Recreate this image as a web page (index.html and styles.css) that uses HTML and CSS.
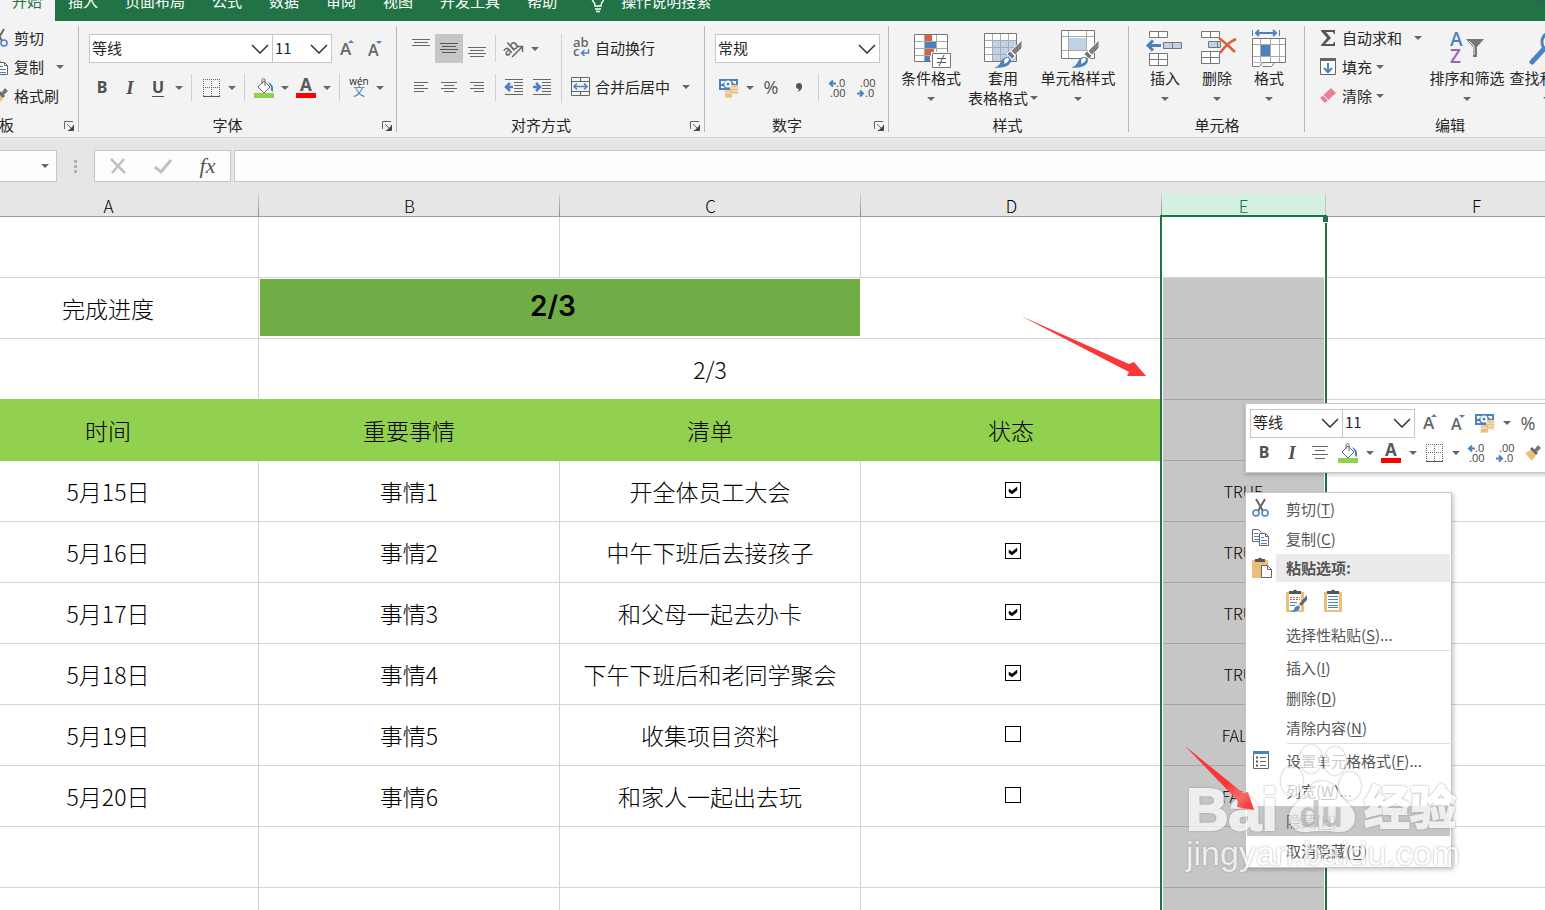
FILE: index.html
```
<!DOCTYPE html>
<html lang="zh-CN">
<head>
  <meta charset="UTF-8">
  <meta name="viewport" content="width=device-width, initial-scale=1.0">
  <title>完成进度</title>
  <link rel="stylesheet" href="styles.css">
</head>
<body>

  <!-- shared icons -->
  <svg class="defs" aria-hidden="true">
    <symbol id="i-grow" viewBox="0 0 20 20"><text x="4" y="16" font-size="17" class="t-semi">A</text><path d="M12 4l3-3 3 3z" fill="#4b82bd"/></symbol>
    <symbol id="i-shrink" viewBox="0 0 20 20"><text x="4" y="17" font-size="16" class="t-semi">A</text><path d="M12 2h6l-3 3z" fill="#4b82bd"/></symbol>
    <symbol id="i-border" viewBox="0 0 20 20"><path d="M2 1.500h17M2 9.500h17M2.500 1v17M10.500 1v17M18.500 1v17" stroke="#666" stroke-dasharray="1 1" fill="none"/><path d="M2 18.500h17" stroke="#555"/></symbol>
    <symbol id="i-fill" viewBox="0 0 20 20"><path d="M4 9l6-6 6 6-6 6z" fill="#fff" stroke="#666"/><path d="M8 6V1.500q2-2 3 0V8" fill="none" stroke="#666"/><path d="M14 4q6 2 5 10q-3-1-2-5z" fill="#4b82bd"/><path d="M0 15h20v5H0z" fill="#92d050"/></symbol>
    <symbol id="i-color" viewBox="0 0 20 20"><text x="4" y="13" font-size="17" class="t-bold">A</text><path d="M0 15h20v5H0z" fill="#f00"/></symbol>
    <symbol id="i-center" viewBox="0 0 20 20"><path d="M2 5.500h16M5 9.500h10M2 13.500h16M5 17.500h10" transform="translate(0 -2)" stroke="#666"/></symbol>
    <symbol id="i-money" viewBox="0 0 20 20"><path d="M0 1h19v11H0z" fill="#4b82bd"/><path d="M2 3h4q-1 3-4 3zM17 3h-4q1 3 4 3zM2 10h4q-1-2-4-2z" fill="#fff"/><circle cx="9" cy="6" r="3.500" fill="#fff"/><circle cx="9" cy="6" r="1.500" fill="#4b82bd"/><path d="M11 7h9v11h-6v2H5v-8h6z" fill="#f3f3f3"/><path d="M12 8.500h7M11 11.500h8M12 14.500h7M6 13.500h7M6 16.500h7M6 18.500h7" stroke="#e9bf79" stroke-width="2"/></symbol>
    <symbol id="i-inc" viewBox="0 0 20 20"><path d="M2 5.500h6M5 2.500l-3 3 3 3" fill="none" stroke="#4b82bd" stroke-width="2"/><text x="8" y="9" font-size="11" class="t-num">.0</text><text x="2" y="19" font-size="11" class="t-num">.00</text></symbol>
    <symbol id="i-dec" viewBox="0 0 20 20"><text x="4" y="9" font-size="11" class="t-num">.00</text><path d="M1 15.500h6M4 12.500l3 3-3 3" fill="none" stroke="#4b82bd" stroke-width="2"/><text x="9" y="19" font-size="11" class="t-num">.0</text></symbol>
    <symbol id="i-brush" viewBox="0 0 18 18"><path d="M1 9l6-3 5 5-4 6z" fill="#e9bf79"/><path d="M6 5l2-2 6 6-2 2z" fill="#666"/><path d="M10 6l4-5 3 3-4 4z" fill="#777"/></symbol>
    <symbol id="i-cut" viewBox="0 0 18 20"><path d="M4 1l7 12M13 1L6 13" stroke="#666" stroke-width="2"/><circle cx="4" cy="15" r="3" fill="none" stroke="#4b82bd" stroke-width="1.500"/><circle cx="13" cy="15" r="3" fill="none" stroke="#4b82bd" stroke-width="1.500"/></symbol>
    <symbol id="i-copy" viewBox="0 0 18 20"><path d="M.500 1.500h6l3 3v9h-9z" fill="#fff" stroke="#666"/><path d="M2 5.500h4M2 8.500h5M2 11.500h5" stroke="#4b82bd"/><path d="M7.500 5.500h6l3 3v9h-9z" fill="#fff" stroke="#666"/><path d="M13.500 5.500v3h3" fill="none" stroke="#666"/><path d="M9 9.500h3M9 12.500h6M9 15.500h6" stroke="#4b82bd"/></symbol>
    <symbol id="i-launch" viewBox="0 0 10 10"><path d="M.500 8V.500H9M3 3l5 5" fill="none" stroke="#666"/><path d="M4 9.500h5.500V4" fill="none" stroke="#444"/><path d="M9 5v4H5z" fill="#444"/></symbol>
    <symbol id="i-paint" viewBox="0 0 38 38"><path d="M38 10v8l-7 7-4-4z" fill="#808080" stroke="#f3f3f3"/><path d="M26 21l5 5-3 3-5-5z" fill="#777" stroke="#f3f3f3"/><path d="M10 37.500q5-1 7-6 3-6 8-4 4 3 0 7-5 4-15 3z" fill="#4b82bd"/><path d="M20 30q3-4 5-1 0 3-5 5 1-2 0-4z" fill="#fff"/></symbol>
  </svg>

  <div class="app">
    <nav class="tabs">
      <a href="#" class="tab active">开始</a>
      <a href="#" class="tab">插入</a>
      <a href="#" class="tab">页面布局</a>
      <a href="#" class="tab">公式</a>
      <a href="#" class="tab">数据</a>
      <a href="#" class="tab">审阅</a>
      <a href="#" class="tab">视图</a>
      <a href="#" class="tab">开发工具</a>
      <a href="#" class="tab">帮助</a>
      <a href="#" class="tab tell">
        <svg width="16" height="24" viewBox="0 0 16 24" fill="none" stroke="#fff" stroke-width="1.500"><path d="M5 17q0-3-2-5a6 6 0 1 1 10 0q-2 2-2 5zM5 20h6M6 22.500h4"/></svg>
        操作说明搜索
      </a>
    </nav>

    <div class="ribbon">
      <section class="group clipboard">
        <div class="stack">
          <button class="small"><svg width="18" height="20"><use href="#i-cut"/></svg>剪切</button>
          <button class="small"><svg width="18" height="20"><use href="#i-copy"/></svg>复制<i class="caret far"></i></button>
          <button class="small"><svg width="18" height="18"><use href="#i-brush"/></svg>格式刷</button>
        </div>
        <div class="group-label"><span>剪贴板</span><button class="launch" aria-label="剪贴板设置"><svg width="10" height="10"><use href="#i-launch"/></svg></button></div>
      </section>

      <section class="group font">
        <div class="row combos">
          <select class="combo" aria-label="字体"><option>等线</option></select>
          <select class="combo size" aria-label="字号"><option>11</option></select>
          <button class="btn" aria-label="增大字号"><svg width="20" height="20"><use href="#i-grow"/></svg></button>
          <button class="btn" aria-label="减小字号"><svg width="20" height="20"><use href="#i-shrink"/></svg></button>
        </div>
        <div class="row">
          <button class="btn bold">B</button>
          <button class="btn italic">I</button>
          <button class="btn bold under">U</button>
          <button class="drop" aria-label="下划线"><i class="caret"></i></button>
          <i class="sep"></i>
          <button class="btn" aria-label="边框"><svg width="20" height="20"><use href="#i-border"/></svg></button>
          <button class="drop" aria-label="更多边框"><i class="caret"></i></button>
          <i class="sep"></i>
          <button class="btn" aria-label="填充颜色"><svg width="20" height="20"><use href="#i-fill"/></svg></button>
          <button class="drop" aria-label="更多填充"><i class="caret"></i></button>
          <button class="btn" aria-label="字体颜色"><svg width="20" height="20"><use href="#i-color"/></svg></button>
          <button class="drop" aria-label="更多颜色"><i class="caret"></i></button>
          <i class="sep"></i>
          <button class="btn pinyin"><span>wén</span><b>文</b></button>
          <button class="drop" aria-label="拼音"><i class="caret"></i></button>
        </div>
        <div class="group-label"><span>字体</span><button class="launch" aria-label="字体设置"><svg width="10" height="10"><use href="#i-launch"/></svg></button></div>
      </section>

      <section class="group align">
        <div class="split">
          <div class="rows">
            <div class="row">
              <button class="btn" aria-label="顶端对齐"><svg width="20" height="20" stroke="#666"><path d="M1 3.500h18M3 6.500h14M1 9.500h18" transform="translate(0 -3)"/></svg></button>
              <button class="btn on" aria-label="垂直居中"><svg width="20" height="20" stroke="#555"><path d="M1 4.500h18M3 7.500h14M1 10.500h18M3 13.500h14"/></svg></button>
              <button class="btn" aria-label="底端对齐"><svg width="20" height="20" stroke="#666"><path d="M1 8.500h18M3 11.500h14M1 14.500h18M3 17.500h14"/></svg></button>
              <i class="sep"></i>
              <button class="btn" aria-label="方向"><svg width="20" height="20"><text x="1" y="15" font-size="14" class="t-semi" transform="rotate(-42 6 14)">ab</text><path d="M8 18L18 8M13 7.500h5.500V13" fill="none" stroke="#666" stroke-width="1.500"/></svg></button>
              <button class="drop" aria-label="更多方向"><i class="caret"></i></button>
            </div>
            <div class="row">
              <button class="btn" aria-label="左对齐"><svg width="20" height="20" stroke="#666"><path d="M3 4.500h14M3 7.500h10M3 10.500h14M3 13.500h10"/></svg></button>
              <button class="btn" aria-label="居中"><svg width="20" height="20" stroke="#666"><path d="M2 4.500h16M5 7.500h10M2 10.500h16M5 13.500h10"/></svg></button>
              <button class="btn" aria-label="右对齐"><svg width="20" height="20" stroke="#666"><path d="M3 4.500h14M7 7.500h10M3 10.500h14M7 13.500h10"/></svg></button>
              <i class="sep"></i>
              <button class="btn" aria-label="减少缩进"><svg width="20" height="20" fill="none" stroke="#666"><path d="M1 1.500h18M10 4.500h9M10 7.500h9M10 10.500h9M10 13.500h9M1 16.500h18"/><path d="M2 9h7M6 5L2 9l4 4" stroke="#4b82bd" stroke-width="2.500"/></svg></button>
              <button class="btn" aria-label="增加缩进"><svg width="20" height="20" fill="none" stroke="#666"><path d="M1 1.500h18M10 4.500h9M10 7.500h9M10 10.500h9M10 13.500h9M1 16.500h18"/><path d="M1 9h7M4 5l4 4-4 4" stroke="#4b82bd" stroke-width="2.500"/></svg></button>
            </div>
          </div>
          <i class="sep tall"></i>
          <div class="rows">
            <button class="wide"><svg width="20" height="20"><text x="2" y="9" font-size="13" class="t-semi">ab</text><text x="2" y="18" font-size="13" class="t-semi">c</text><path d="M17.500 11v4H11M13.500 12l-3 3 3 3" fill="none" stroke="#4b82bd" stroke-width="1.500"/></svg>自动换行</button>
            <button class="wide"><svg width="20" height="20" fill="none" stroke="#666"><path d="M.500.500h18v18H.500zM.500 4.500h18M.500 14.500h18M9.500.500v4M9.500 14.500v4"/><path d="M3 9.500h13M6 6.500l-3 3 3 3M13 6.500l3 3-3 3" stroke="#4b82bd" stroke-width="1.500"/></svg>合并后居中<i class="caret far"></i></button>
          </div>
        </div>
        <div class="group-label"><span>对齐方式</span><button class="launch" aria-label="对齐设置"><svg width="10" height="10"><use href="#i-launch"/></svg></button></div>
      </section>

      <section class="group number">
        <div class="row">
          <select class="combo" aria-label="数字格式"><option>常规</option></select>
        </div>
        <div class="row">
          <button class="btn" aria-label="会计格式"><svg width="20" height="20"><use href="#i-money"/></svg></button>
          <button class="drop" aria-label="更多货币"><i class="caret"></i></button>
          <button class="btn percent">%</button>
          <button class="btn" aria-label="千位分隔"><svg width="20" height="20"><circle cx="10" cy="8" r="3" fill="#555"/><path d="M13 8q0 5-5 6 3-2 2-6z" fill="#555"/></svg></button>
          <i class="sep"></i>
          <button class="btn" aria-label="增加小数位"><svg width="20" height="20"><use href="#i-inc"/></svg></button>
          <button class="btn" aria-label="减少小数位"><svg width="20" height="20"><use href="#i-dec"/></svg></button>
        </div>
        <div class="group-label"><span>数字</span><button class="launch" aria-label="数字设置"><svg width="10" height="10"><use href="#i-launch"/></svg></button></div>
      </section>

      <section class="group styles">
        <div class="bigs">
          <button class="big">
            <svg width="38" height="38" viewBox="-2 0 38 38"><path d="M.500 4.500h33v27H.500z" fill="#fff" stroke="#777"/><path d="M10.500 5v26M22.500 5v26M1 11.500h32M1 18.500h32M1 25.500h32" stroke="#aaa"/><path d="M11 5h7v6h-7zM11 19h9v6h-9z" fill="#d8613c"/><path d="M11 12h11v6H11zM11 26h5v5h-5z" fill="#4b82bd"/><path d="M17 22h20v15H17z" fill="#f3f3f3"/><path d="M18.500 23.500h18v14h-18z" fill="#fff" stroke="#777"/><path d="M23 28.500h9M23 32.500h9M30 25l-5 11" stroke="#555"/></svg>
            <span>条件格式</span><i class="caret"></i>
          </button>
          <button class="big mid">
            <svg width="38" height="38"><path d="M.500 3.500h32v28H.500z" fill="#fff" stroke="#777"/><path d="M9 11h23v20H9z" fill="#bfd2e8"/><path d="M8.500 4v27M16.500 4v27M24.500 4v27M1 10.500h31M1 17.500h31M1 24.500h31" stroke="#aaa"/><use href="#i-paint"/></svg>
            <span>套用</span><span class="line">表格格式<i class="caret"></i></span>
          </button>
          <button class="big last">
            <svg width="38" height="38" viewBox="-2 0 38 38"><path d="M.500.500h33v28H.500z" fill="#fff" stroke="#777"/><path d="M8 8h17v12H8z" fill="#bfd2e8"/><path d="M7.500 1v27M25.500 1v27M1 6.500h32M1 20.500h32" stroke="#aaa"/><use href="#i-paint" width="38" height="38"/></svg>
            <span>单元格样式</span><i class="caret"></i>
          </button>
        </div>
        <div class="group-label"><span>样式</span></div>
      </section>

      <section class="group cells">
        <div class="bigs">
          <button class="big">
            <svg width="38" height="38" fill="#fff" stroke="#777"><path d="M3.500 1.500h18v6h-18zM12.500 1.500v6M3.500 23.500h18v12h-18zM12.500 23.500v12M3.500 29.500h18"/><path d="M17.500 12.500h18v6h-18zM26.500 12.500v6" fill="#bfd2e8"/><path d="M2 15.500h13M7 10.500l-5 5 5 5" fill="none" stroke="#4b82bd" stroke-width="3"/></svg>
            <span>插入</span><i class="caret"></i>
          </button>
          <button class="big">
            <svg width="38" height="38" fill="#fff" stroke="#777"><path d="M3.500 1.500h18v6h-18zM12.500 1.500v6M3.500 21.500h18v12h-18zM12.500 21.500v12M3.500 27.500h18"/><path d="M10.500 11.500h12v6h-12zM19.500 11.500v6" fill="#bfd2e8"/><path d="M21 8q8 6 16 14M38 9q-9 4-16 14" fill="none" stroke="#d8613c" stroke-width="2.500"/></svg>
            <span>删除</span><i class="caret"></i>
          </button>
          <button class="big">
            <svg width="38" height="38" fill="none" stroke="#777"><path d="M2.500 8.500h33v24h-33z" fill="#fff"/><path d="M10.500 9v23M20.500 9v23M29.500 9v23M3 14.500h32M3 26.500h32" stroke="#aaa"/><path d="M11 15h9v11h-9z" fill="#4b82bd" stroke="none"/><path d="M2.500 32.500v4h7l3-4M12.500 36.500h9l3-4" fill="#fff"/><path d="M2.500 0v6M29.500 0v6" stroke="#4b82bd"/><path d="M6 3h20M9 0L6 3l3 3M23 0l3 3-3 3" stroke="#4b82bd" stroke-width="2"/></svg>
            <span>格式</span><i class="caret"></i>
          </button>
        </div>
        <div class="group-label"><span>单元格</span></div>
      </section>

      <section class="group editing">
        <div class="split">
          <div class="stack">
            <button class="small"><svg width="18" height="18"><path d="M2 1h14v4h-1l-1-2H7l5 6-6 6h8l1-2h1v4H2v-1l6-7-6-7z" fill="#555"/></svg>自动求和<i class="caret far"></i></button>
            <button class="small"><svg width="18" height="18"><path d="M1.500 1.500h15v15h-15z" fill="#fff" stroke="#666"/><path d="M1 0h16v3H1z" fill="#666"/><path d="M9 5v9M5 10l4 4 4-4" fill="none" stroke="#4b82bd" stroke-width="2"/></svg>填充<i class="caret"></i></button>
            <button class="small"><svg width="18" height="18"><path d="M1 11L12 1l5 5L6 16z" fill="#e88098"/><path d="M4 8l5 5" stroke="#fff"/></svg>清除<i class="caret"></i></button>
          </div>
          <button class="big">
            <svg width="38" height="38"><text x="2" y="16" font-size="19" class="t-sort" fill="#4b82bd">A</text><text x="2" y="33" font-size="19" class="t-sort" fill="#9a63b8">Z</text><path d="M18 9h18l-7 8v10h-4V17z" fill="#777"/><path d="M21 11l5 5v9" fill="none" stroke="#f3f3f3"/></svg>
            <span>排序和筛选</span><i class="caret"></i>
          </button>
          <button class="big">
            <svg width="38" height="38"><path d="M4 32l12-13" stroke="#4b82bd" stroke-width="5" stroke-linecap="round"/><circle cx="24" cy="12" r="10" fill="#fff" stroke="#4b82bd" stroke-width="3"/></svg>
            <span>查找和选择</span><i class="caret"></i>
          </button>
        </div>
        <div class="group-label"><span>编辑</span></div>
      </section>
    </div>

    <div class="formula-bar">
      <button class="name-box" aria-label="名称框"><i class="caret"></i></button>
      <i class="dots"></i>
      <div class="fx-buttons">
        <button aria-label="取消"><svg width="18" height="18"><path d="M2 2l14 14M15 2L3 16" stroke="#c0c0c0" stroke-width="2.500"/></svg></button>
        <button aria-label="输入"><svg width="18" height="18"><path d="M1 10l6 5L17 3" fill="none" stroke="#c0c0c0" stroke-width="3"/></svg></button>
        <button class="fx">fx</button>
      </div>
      <input class="formula" type="text" aria-label="编辑栏">
    </div>

    <main class="sheet">
      <table>
        <colgroup><col><col><col><col><col class="narrow"><col></colgroup>
        <thead>
          <tr><th>A</th><th>B</th><th>C</th><th>D</th><th class="picked">E<div class="selection"></div></th><th>F</th></tr>
        </thead>
        <tbody>
          <tr><td></td><td></td><td></td><td></td><td></td><td></td></tr>
          <tr><td>完成进度</td><td colspan="3" class="progress"><div class="bar" style="width: 66.66%">2/3</div></td><td class="flag"></td><td></td></tr>
          <tr class="before-title"><td>&nbsp;</td><td colspan="3">2/3</td><td class="flag"></td><td></td></tr>
          <tr class="title"><td>时间</td><td>重要事情</td><td>清单</td><td>状态</td><td class="flag"></td><td></td></tr>
          <tr><td>5月15日</td><td>事情1</td><td>开全体员工大会</td><td class="check"><input type="checkbox" aria-label="事情1" checked></td><td class="flag">TRUE</td><td></td></tr>
          <tr><td>5月16日</td><td>事情2</td><td>中午下班后去接孩子</td><td class="check"><input type="checkbox" aria-label="事情2" checked></td><td class="flag">TRUE</td><td></td></tr>
          <tr><td>5月17日</td><td>事情3</td><td>和父母一起去办卡</td><td class="check"><input type="checkbox" aria-label="事情3" checked></td><td class="flag">TRUE</td><td></td></tr>
          <tr><td>5月18日</td><td>事情4</td><td>下午下班后和老同学聚会</td><td class="check"><input type="checkbox" aria-label="事情4" checked></td><td class="flag">TRUE</td><td></td></tr>
          <tr><td>5月19日</td><td>事情5</td><td>收集项目资料</td><td class="check"><input type="checkbox" aria-label="事情5"></td><td class="flag">FALSE</td><td></td></tr>
          <tr><td>5月20日</td><td>事情6</td><td>和家人一起出去玩</td><td class="check"><input type="checkbox" aria-label="事情6"></td><td class="flag">FALSE</td><td></td></tr>
          <tr><td></td><td></td><td></td><td></td><td class="flag"></td><td></td></tr>
          <tr><td></td><td></td><td></td><td></td><td class="flag"></td><td></td></tr>
        </tbody>
      </table>
    </main>

    <div class="mini-toolbar">
      <div class="row combos">
        <select class="combo" aria-label="字体"><option>等线</option></select>
        <select class="combo size" aria-label="字号"><option>11</option></select>
        <button class="btn" aria-label="增大字号"><svg width="20" height="20"><use href="#i-grow"/></svg></button>
        <button class="btn" aria-label="减小字号"><svg width="20" height="20"><use href="#i-shrink"/></svg></button>
        <button class="btn" aria-label="会计格式"><svg width="20" height="20"><use href="#i-money"/></svg></button>
        <button class="drop" aria-label="更多货币"><i class="caret"></i></button>
        <button class="btn percent">%</button>
      </div>
      <div class="row">
        <button class="btn bold">B</button>
        <button class="btn italic">I</button>
        <button class="btn" aria-label="居中"><svg width="20" height="20"><use href="#i-center"/></svg></button>
        <button class="btn" aria-label="填充颜色"><svg width="20" height="20"><use href="#i-fill"/></svg></button>
        <button class="drop" aria-label="更多填充"><i class="caret"></i></button>
        <button class="btn" aria-label="字体颜色"><svg width="20" height="20"><use href="#i-color"/></svg></button>
        <button class="drop" aria-label="更多颜色"><i class="caret"></i></button>
        <button class="btn" aria-label="边框"><svg width="20" height="20"><use href="#i-border"/></svg></button>
        <button class="drop" aria-label="更多边框"><i class="caret"></i></button>
        <button class="btn" aria-label="增加小数位"><svg width="20" height="20"><use href="#i-inc"/></svg></button>
        <button class="btn" aria-label="减少小数位"><svg width="20" height="20"><use href="#i-dec"/></svg></button>
        <button class="btn" aria-label="格式刷"><svg width="18" height="18"><use href="#i-brush"/></svg></button>
      </div>
    </div>

    <div class="menu">
      <button class="item"><svg width="18" height="20"><use href="#i-cut"/></svg><span>剪切(<u>T</u>)</span></button>
      <button class="item"><svg width="18" height="20"><use href="#i-copy"/></svg><span>复制(<u>C</u>)</span></button>
      <div class="heading">
        <svg width="20" height="22"><path d="M0 3h16v18H0z" fill="#e9bf79"/><path d="M3 5V2h3q2-3 4 0h3v3z" fill="#555"/><path d="M9.500 8.500h6l4 4v8h-10z" fill="#fff" stroke="#666"/><path d="M15.500 8.500v4h4" fill="none" stroke="#666"/></svg>
        <b>粘贴选项:</b>
      </div>
      <div class="paste">
        <button aria-label="粘贴"><svg width="22" height="24"><path d="M0 3h18v20H0z" fill="#e9bf79"/><path d="M3 5h12v16H3z" fill="#fff"/><path d="M3 5V2h4q2-3 4 0h4v3z" fill="#555"/><path d="M4 8.500h10M4 10.500h10" stroke="#d8613c" stroke-dasharray="2 1"/><path d="M4 13.500h7M4 16.500h5" stroke="#4b82bd"/><path d="M21 6v5l-6 6-2-2z" fill="#666"/><path d="M4 23q4-1 5-5 4-3 5 0 0 5-10 5z" fill="#4b82bd"/></svg></button>
        <button aria-label="粘贴值"><svg width="18" height="24"><path d="M0 3h18v20H0z" fill="#e9bf79"/><path d="M3 5h12v16H3z" fill="#fff"/><path d="M3 5V2h4q2-3 4 0h4v3z" fill="#555"/><path d="M4 7.500h10M4 10.500h10M4 13.500h10M4 16.500h10M4 18.500h10" stroke="#4b82bd"/></svg></button>
      </div>
      <button class="item"><span>选择性粘贴(<u>S</u>)...</span></button>
      <hr>
      <button class="item"><span>插入(<u>I</u>)</span></button>
      <button class="item"><span>删除(<u>D</u>)</span></button>
      <button class="item"><span>清除内容(<u>N</u>)</span></button>
      <hr>
      <button class="item"><svg width="18" height="20"><path d="M1.500 1.500h15v17h-15z" fill="#fff" stroke="#666"/><path d="M1 1h16v3H1z" fill="#4b82bd"/><path d="M4 7.500h2M4 11.500h2M4 15.500h2" stroke="#555" stroke-width="2"/><path d="M8 7.500h6M8 11.500h6M8 15.500h6" stroke="#666"/></svg><span>设置单元格格式(<u>F</u>)...</span></button>
      <button class="item"><span>列宽(<u>W</u>)...</span></button>
      <button class="item hover"><span>隐藏(<u>H</u>)</span></button>
      <button class="item"><span>取消隐藏(<u>U</u>)</span></button>
    </div>

    <svg class="pointer first" width="126" height="62" viewBox="0 0 126 62"><path d="M0 0L108 48 113 46 125 60H106L108 56z" fill="#fc3737"/></svg>

    <svg class="watermark" width="290" height="150" viewBox="0 0 290 150">
      <g class="logo">
        <text x="2" y="90" font-size="59" font-weight="bold">Bai</text>
        <ellipse cx="127" cy="19" rx="10" ry="13"/>
        <ellipse cx="151" cy="21" rx="10" ry="13"/>
        <ellipse cx="108" cy="41" rx="10" ry="14"/>
        <ellipse cx="166" cy="46" rx="10" ry="13"/>
        <path d="M138 42q10 0 16 11 4 7 10 12 9 9 5 18-4 9-16 8-15-2-30 0-12 1-16-8-4-9 5-18 6-5 10-12 6-11 16-11z"/>
        <text x="180" y="84" font-size="46" font-weight="bold">经验</text>
        <text x="2" y="125" font-size="34" class="site">jingyan.baidu.com</text>
      </g>
      <text x="115" y="87" font-size="36" font-weight="bold" class="du">du</text>
    </svg>

    <svg class="pointer second" width="70" height="66" viewBox="0 0 70 66"><defs><linearGradient id="fade" x1="0" y1="0" x2="1" y2="1"><stop offset=".6" stop-color="#fc3737"/><stop offset=".8" stop-color="#f76a6a"/><stop offset=".95" stop-color="#fc3737"/></linearGradient></defs><path d="M0 0L58 47 63 46 69 64 52 61 53 55z" fill="url(#fade)"/></svg>
  </div>

</body>
</html>
```
FILE: styles.css
```
* {
  box-sizing: border-box;
}

body {
  margin: 0;
  font-family: "Noto Sans CJK SC", sans-serif;
  font-size: 15px;
  color: #262626;
  background: #fff;
  overflow: hidden;
}

button {
  display: flex;
  align-items: center;
  justify-content: center;
  margin: 0;
  padding: 0;
  border: none;
  background: none;
  font: inherit;
  color: inherit;
}

svg {
  display: block;
  flex: none;
  overflow: visible;
}

.defs {
  position: absolute;
  width: 0;
  height: 0;
}

.t-bold {
  font-family: "Noto Sans", sans-serif;
  font-weight: bold;
  fill: #5a5a5a;
}

.t-semi {
  font-family: "Open Sans", sans-serif;
  font-weight: 600;
  fill: #666;
}

.t-sort {
  font-family: "Open Sans", sans-serif;
  font-weight: 600;
}

.t-num {
  font-family: "Open Sans", sans-serif;
  fill: #444;
}

.app {
  position: relative;
  display: flex;
  flex-direction: column;
  height: 100vh;
  overflow: hidden;
}

/* tabs */
.tabs {
  display: flex;
  align-items: flex-end;
  flex: none;
  height: 21px;
  overflow: hidden;
  background: radial-gradient(circle at 100% -8px, #28684a 12px, #217346 13px);
}

.tab {
  display: flex;
  align-items: center;
  flex: none;
  height: 40px;
  padding: 0 14px 1px 13px;
  color: #fff;
  line-height: 38px;
  text-decoration: none;
}

.tab.active {
  background: #f3f3f3;
  color: #217346;
  padding-left: 12px;
  padding-right: 13px;
}

.tell {
  gap: 15px;
  padding-left: 19px;
}

/* ribbon */
.ribbon {
  display: flex;
  flex: none;
  height: 117px;
  overflow: hidden;
  background: #f3f3f3;
  border-bottom: 1px solid #d2d2d2;
}

.group {
  position: relative;
  display: flex;
  flex-direction: column;
  flex: none;
  padding: 13px 0 1px 9px;
}

.group::after {
  content: "";
  position: absolute;
  right: 0;
  top: 5px;
  bottom: 5px;
  width: 1px;
  background: #b9b9b9;
}

.clipboard {
  width: 79px;
  padding: 3px 0 1px;
  overflow: hidden;
}

.font {
  width: 318px;
}

.align {
  width: 308px;
  padding-left: 10px;
}

.number {
  width: 184px;
  padding-left: 10px;
}

.styles {
  width: 240px;
  padding: 9px 0 1px 7px;
}

.cells {
  width: 176px;
  padding: 9px 0 1px 10px;
}

.editing {
  width: 290px;
  padding: 3px 0 1px 14px;
}

.editing .big {
  width: 80px;
  padding-top: 6px;
}

.group-label {
  display: flex;
  align-items: center;
  height: 20px;
  margin: auto 0 0 -10px;
}

.group-label span {
  flex: 1;
  padding-bottom: 3px;
  text-align: center;
  white-space: nowrap;
}

.editing .group-label {
  margin-left: -14px;
}

.clipboard .group-label {
  justify-content: flex-end;
  margin-left: 0;
}

.clipboard .group-label span {
  flex: none;
  padding-right: 45px;
}

.launch {
  flex: none;
  width: 20px;
}

.row {
  display: flex;
  align-items: center;
  height: 29px;
  margin-bottom: 10px;
}

.combos {
  padding-left: 1px;
}

.combo {
  width: 184px;
  height: 29px;
  padding: 0 3px 2px 2px;
  border: 1px solid #c6c6c6;
  border-radius: 0;
  appearance: none;
  background: #fff url("data:image/svg+xml,%3Csvg xmlns='http://www.w3.org/2000/svg' width='18' height='10'%3E%3Cpath d='M1 1l8 8 8-8' fill='none' stroke='%23333' stroke-width='1.5'/%3E%3C/svg%3E") no-repeat right 3px center;
  font: inherit;
  color: #262626;
}

.combo.size {
  width: 60px;
  margin-left: -1px;
}

.number .combo {
  width: 165px;
}

.btn {
  flex: none;
  width: 28px;
  height: 29px;
}

.btn.on {
  background: #c6c6c6;
}

.drop {
  flex: none;
  width: 14px;
  height: 29px;
}

.caret {
  flex: none;
  width: 0;
  height: 0;
  border: 4px solid transparent;
  border-top-color: #666;
  border-bottom: none;
}

.sep {
  flex: none;
  width: 1px;
  height: 27px;
  margin: 0 5px;
  background: #d0d0d0;
}

.align .row .sep {
  margin: 0 4px;
}

.sep.tall {
  height: 69px;
}

.bold {
  padding-bottom: 2px;
  font-family: "Noto Sans", sans-serif;
  font-size: 16px;
  font-weight: bold;
  color: #505050;
}

.italic {
  font-family: "Liberation Serif", serif;
  font-size: 19px;
  font-weight: bold;
  font-style: italic;
  color: #505050;
}

.under {
  text-decoration: underline;
  text-underline-offset: 3px;
  text-decoration-thickness: 1px;
}

.pinyin {
  flex-direction: column;
  font-family: "Open Sans", "Noto Sans CJK SC", sans-serif;
  font-size: 10px;
  line-height: 9px;
}

.pinyin b {
  font-size: 12px;
  line-height: 12px;
  font-weight: normal;
  color: #4b82bd;
}

.percent {
  padding-bottom: 1px;
  font-family: "Open Sans", sans-serif;
  font-size: 18px;
  color: #555;
}

.split {
  display: flex;
}

.rows {
  display: flex;
  flex-direction: column;
}

.wide {
  justify-content: flex-start;
  gap: 4px;
  height: 29px;
  margin: 0 0 10px 4px;
  padding-bottom: 2px;
}

.far {
  margin-left: 8px;
}

.stack {
  display: flex;
  flex-direction: column;
}

.clipboard .stack {
  margin-left: -9px;
}

.small {
  justify-content: flex-start;
  gap: 5px;
  height: 29px;
  padding-bottom: 2px;
  white-space: nowrap;
}

.editing .stack {
  width: 108px;
}

.small .caret {
  margin-left: -1px;
}

.small .caret.far {
  margin-left: 7px;
}

.bigs {
  display: flex;
}

.big {
  flex-direction: column;
  justify-content: flex-start;
  width: 70px;
  line-height: 20px;
  white-space: nowrap;
}

.big .caret {
  margin-top: 9px;
}

.big.mid {
  width: 74px;
}

.big.last {
  width: 76px;
}

.cells .big {
  width: 52px;
}

.big .line {
  display: flex;
  align-items: center;
  gap: 2px;
}

.big .line .caret {
  margin: 0;
}

/* formula bar */
.formula-bar {
  display: flex;
  align-items: center;
  flex: none;
  height: 56px;
  background: #e6e6e6;
}

.name-box {
  justify-content: flex-end;
  width: 57px;
  height: 32px;
  padding-right: 7px;
  background: #fdfdfd;
  border: 1px solid #c6c6c6;
  border-left: none;
}

.dots {
  width: 3px;
  height: 13px;
  margin: 0 17px;
  background: repeating-linear-gradient(#b0b0b0 0 3px, transparent 3px 5px);
}

.fx-buttons {
  display: flex;
  width: 137px;
  height: 32px;
  margin-right: 3px;
  background: #fdfdfd;
  border: 1px solid #c6c6c6;
}

.fx-buttons button {
  flex: 1;
}

.fx {
  font-family: "Liberation Serif", serif;
  font-size: 22px;
  font-style: italic;
  color: #555;
}

.formula {
  flex: 1;
  height: 32px;
  background: #fdfdfd;
  border: 1px solid #c6c6c6;
  border-right: none;
}

/* sheet */
.sheet {
  flex: 1;
  overflow: hidden;
}

table {
  width: 1669px;
  margin-left: -42px;
  table-layout: fixed;
  border-collapse: separate;
  border-spacing: 0;
}

col {
  width: 301px;
}

col.narrow {
  width: 164px;
}

th {
  position: relative;
  height: 23px;
  padding: 2px 0 0;
  border-bottom: 1px solid #9b9b9b;
  background: linear-gradient(#d0d0d0, #8c8c8c) no-repeat right / 1px 100% #e6e6e6;
  font-size: 17px;
  font-weight: 300;
  line-height: 20px;
  color: #000;
}

th.picked {
  background: #d3f0e0;
  border-right: 1px solid #c6c6c6;
  color: #217346;
}

td {
  height: 61px;
  padding: 0;
  border-right: 1px solid #d4d4d4;
  border-bottom: 1px solid #d4d4d4;
  text-align: center;
  font-size: 23px;
  font-weight: 300;
  line-height: 30px;
  color: #000;
}

td.flag {
  background: #c6c6c6;
  border-bottom-color: #a6a6a6;
  font-size: 16px;
}

td.progress {
  padding: 1px 1px 2px;
  vertical-align: top;
}

.bar {
  height: 57px;
  padding-right: 14px;
  background: #70ad47;
  font-family: Inter, sans-serif;
  font-size: 28px;
  font-weight: 600;
  line-height: 54px;
}

.before-title td:nth-child(-n+2) {
  border-bottom-color: #92d050;
}

.title td:nth-child(-n+4) {
  background: #92d050;
  border-color: #92d050;
}

td.check {
  padding: 0 0 2px 4px;
}

.check input {
  display: block;
  width: 16px;
  height: 16px;
  margin: 0 auto;
  border: 1px solid #000;
  appearance: none;
  background: #fff;
}

.check input:checked {
  background: url("data:image/svg+xml,%3Csvg xmlns='http://www.w3.org/2000/svg' width='14' height='14'%3E%3Cpath d='M3 6l3 2 5-4v3L6 11 3 9z' stroke='%23000' stroke-width='.5'/%3E%3C/svg%3E") #fff;
}

/* frame round the selected column */
.selection {
  position: absolute;
  z-index: 1;
  top: calc(100% - 1px);
  left: -2px;
  right: -2px;
  height: 100vh;
  border: 2px solid #217346;
  box-shadow: inset 0 0 0 1px #fff;
}

.selection::after {
  content: "";
  position: absolute;
  top: -1px;
  right: -3px;
  width: 5px;
  height: 6px;
  background: #217346;
  border-bottom: 1px solid #fff;
}

/* floating toolbar and menu */
.mini-toolbar {
  position: absolute;
  z-index: 2;
  left: 1245px;
  top: 403px;
  width: 310px;
  height: 70px;
  padding: 4px;
  background: #fff;
  border: 1px solid #c6c6c6;
  box-shadow: 0 2px 4px rgba(0, 0, 0, 0.2);
}

.mini-toolbar .row {
  height: 30px;
  margin: 0;
  padding: 0;
}

.mini-toolbar .combo {
  width: 93px;
  padding-bottom: 4px;
}

.mini-toolbar .combo.size {
  width: 73px;
}

.mini-toolbar .drop {
  width: 15px;
}

.menu {
  position: absolute;
  z-index: 2;
  left: 1245px;
  top: 492px;
  width: 207px;
  padding: 1px;
  background: #fff;
  border: 1px solid #c6c6c6;
  box-shadow: 2px 2px 4px rgba(0, 0, 0, 0.2);
  color: #555;
}

.item {
  display: grid;
  grid-template-columns: 34px 1fr;
  width: 100%;
  height: 30px;
  padding: 0 0 2px 5px;
  justify-items: start;
  text-align: left;
}

.item span {
  grid-column: 2;
}

.item.hover {
  background: #c6c6c6;
}

.item u {
  text-underline-offset: 2px;
}

.heading {
  display: flex;
  align-items: center;
  gap: 4px;
  height: 28px;
  padding-left: 5px;
}

.heading b {
  flex: 1;
  padding-left: 10px;
  line-height: 28px;
  background: #eaeaea;
}

.paste {
  display: flex;
  gap: 16px;
  height: 38px;
  padding-left: 39px;
}

.menu hr {
  height: 1px;
  margin: 0 0 2px 40px;
  border: none;
  background: #dcdcdc;
}

/* red arrows */
.pointer {
  position: absolute;
  z-index: 4;
  pointer-events: none;
}

.pointer.first {
  left: 1021px;
  top: 316px;
}

.pointer.second {
  left: 1185px;
  top: 746px;
}

/* site mark */
.watermark {
  position: absolute;
  z-index: 3;
  left: 1184px;
  top: 740px;
  font-family: "Liberation Sans", "Noto Sans CJK SC", sans-serif;
  pointer-events: none;
}

.logo {
  fill: #fff;
  stroke: #fff;
  stroke-width: 2px;
  opacity: 0.7;
  filter: drop-shadow(0 0 1px #888);
}

.site {
  stroke-width: 0;
}

.du {
  fill: #999;
  fill-opacity: 0.5;
}
```
